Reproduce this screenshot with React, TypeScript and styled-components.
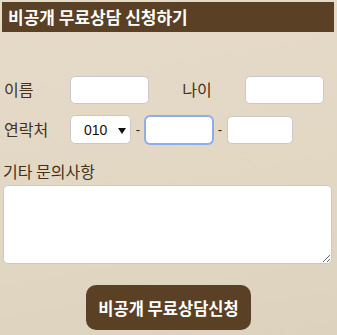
import React from 'react'
import styled, { createGlobalStyle } from 'styled-components'

const GlobalStyle = createGlobalStyle`
  html, body {
    margin: 0;
    padding: 0;
    background: linear-gradient(170deg, #e6dbc9 0%, #e2d7c3 60%, #ddd2bd 100%);
    min-height: 335px;
  }
  body {
    font-family: "Noto Sans CJK KR", "Noto Sans", sans-serif;
  }
`

const Page = styled.div`
  width: 337px;
  height: 335px;
  padding: 2px 3px 0 2px;
  box-sizing: border-box;
`

const Header = styled.h1`
  margin: 0;
  height: 30px;
  background-color: #5a4024;
  color: #ffffff;
  font-size: 17px;
  font-weight: 700;
  line-height: 30px;
  padding-left: 6px;
`

const Form = styled.form`
  display: flex;
  flex-direction: column;
  padding: 43px 0 0 2px;
`

const Row = styled.div<{ $mb: number }>`
  display: flex;
  align-items: center;
  height: 29px;
  margin-bottom: ${(p) => p.$mb}px;
`

const Label = styled.label<{ $w: number; $center?: boolean }>`
  width: ${(p) => p.$w}px;
  flex: none;
  font-size: 16px;
  color: #45301b;
  text-align: ${(p) => (p.$center ? 'center' : 'left')};
  box-sizing: border-box;
  line-height: 29px;
`

const Input = styled.input<{ $w: number; $focused?: boolean }>`
  width: ${(p) => p.$w}px;
  height: 28px;
  box-sizing: border-box;
  border: 1px solid ${(p) => (p.$focused ? '#8dacea' : '#c9c9c9')};
  box-shadow: ${(p) => (p.$focused ? '0 0 0 1px #8dacea' : 'none')};
  border-radius: 5px;
  background: #ffffff;
  font-size: 18px;
  padding: 0 9px;
  outline: none;
  caret-color: #000;
  flex: none;
`

const Select = styled.select`
  width: 61px;
  height: 29px;
  box-sizing: border-box;
  border: 1px solid #c9c9c9;
  border-radius: 5px;
  background: #ffffff;
  font-family: "Liberation Sans", Arial, sans-serif;
  font-size: 14px;
  color: #111;
  padding: 0 0 0 13px;
  appearance: none;
  background-image: url("data:image/svg+xml;utf8,<svg xmlns='http://www.w3.org/2000/svg' width='8' height='6'><path d='M0 0h8L4 6z' fill='%23111'/></svg>");
  background-repeat: no-repeat;
  background-position: 47px 12px;
  flex: none;
`

const Dash = styled.span`
  width: 14px;
  flex: none;
  text-align: center;
  font-family: "Liberation Sans", Arial, sans-serif;
  font-size: 13px;
  color: #222;
`

const AreaLabel = styled.div`
  font-size: 16px;
  color: #45301b;
  line-height: 20px;
  margin-top: 17px;
  margin-left: -1px;
`

const TextArea = styled.textarea`
  display: block;
  margin: 4px 0 0 -1px;
  width: 329px;
  height: 79px;
  box-sizing: border-box;
  border: 1px solid #c9c9c9;
  border-radius: 5px;
  background: #ffffff;
  resize: both;
  outline: none;
`

const ButtonRow = styled.div`
  display: flex;
  justify-content: center;
  margin-top: 21px;
  padding-right: 1px;
`

const SubmitButton = styled.button`
  width: 165px;
  height: 45px;
  border: none;
  border-radius: 10px;
  background-color: #5a4024;
  color: #ffffff;
  font-family: "Noto Sans CJK KR", sans-serif;
  font-size: 16.5px;
  font-weight: 700;
  cursor: pointer;
`

export default function App() {
  return (
    <>
      <GlobalStyle />
      <Page>
        <Header>비공개 무료상담 신청하기</Header>
        <Form onSubmit={(e) => e.preventDefault()}>
          <Row $mb={11}>
            <Label $w={66}>이름</Label>
            <Input $w={79} type="text" />
            <Label $w={96} $center>나이</Label>
            <Input $w={79} type="text" />
          </Row>
          <Row $mb={0}>
            <Label $w={66}>연락처</Label>
            <Select defaultValue="010">
              <option value="010">010</option>
              <option value="011">011</option>
              <option value="016">016</option>
              <option value="017">017</option>
            </Select>
            <Dash>-</Dash>
            <Input $w={68} $focused type="text" autoFocus />
            <Dash>-</Dash>
            <Input $w={66} type="text" />
          </Row>
          <AreaLabel>기타 문의사항</AreaLabel>
          <TextArea />
          <ButtonRow>
            <SubmitButton type="submit">비공개 무료상담신청</SubmitButton>
          </ButtonRow>
        </Form>
      </Page>
    </>
  )
}
